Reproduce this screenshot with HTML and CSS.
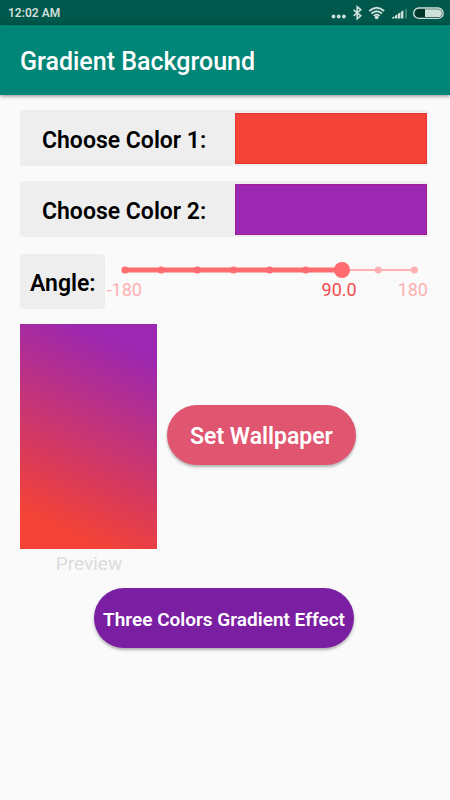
FILE: index.html
```html
<!DOCTYPE html>
<html lang="en">
<head>
<meta charset="utf-8">
<meta name="viewport" content="width=device-width, initial-scale=1">
<title>Gradient Background</title>
<link rel="stylesheet" href="styles.css">
</head>
<body>
<div class="status">
  <span>12:02 AM</span>
  <svg class="status-icons" width="114" height="16" viewBox="0 0 114 16" aria-hidden="true">
    <g fill="#cfdfda">
      <circle cx="3.500" cy="11.500" r="1.900"/><circle cx="8.700" cy="11.500" r="1.900"/><circle cx="13.900" cy="11.500" r="1.900"/>
      <circle cx="46.700" cy="12.300" r="1.900"/>
    </g>
    <path d="M23.600 4.800l7.200 6-3.600 3V1.800l3.600 3-7.200 6" fill="none" stroke="#cfdfda" stroke-width="1.600"/>
    <path d="M39.200 6q7.500-6.500 15 0M41.400 8.500q5.300-4.600 10.600 0M43.700 10.900q3-2.500 6 0" fill="none" stroke="#cfdfda" stroke-width="1.800"/>
    <path d="M62 13.500v-1l2.400-1.200v2.200zM65 13.500v-2.700l2.400-1.500v4.200zM68 13.500V8.800l2.400-1.500v6.200zM71 13.500V6.800l2.400-1.500v8.200z" fill="#cfdfda"/>
    <path d="M75 13.500V4.500l2-1.300v10.300z" fill="#3f8375"/>
    <rect x="83.700" y="3" width="29.500" height="10.400" rx="5.200" fill="#00382c" stroke="#cfdfda" stroke-width="1.400"/>
    <path d="M95 4.300h13a3.900 3.900 0 0 1 0 7.800H95z" fill="#cfdfda"/>
  </svg>
</div>
<header class="appbar"><h1>Gradient Background</h1></header>
<main>
  <div class="card">
    <label for="color1">Choose Color 1:</label>
    <input class="swatch" type="color" id="color1" value="#f44336">
  </div>
  <div class="card">
    <label for="color2">Choose Color 2:</label>
    <input class="swatch" type="color" id="color2" value="#9c27b0">
  </div>
  <div class="angle">
    <label class="angle-label" for="angle">Angle:</label>
    <div class="slider">
      <svg class="track" height="16" aria-hidden="true">
        <line class="light" x1="0" y1="8" x2="100%" y2="8" stroke-width="2"/>
        <line class="strong" x1="0" y1="8" x2="75%" y2="8" stroke-width="5"/>
        <g class="strong">
          <circle cx="0" cy="8" r="3.600"/><circle cx="12.500%" cy="8" r="3.600"/><circle cx="25%" cy="8" r="3.600"/>
          <circle cx="37.500%" cy="8" r="3.600"/><circle cx="50%" cy="8" r="3.600"/><circle cx="62.500%" cy="8" r="3.600"/>
        </g>
        <g class="light"><circle cx="87.500%" cy="8" r="3.600"/><circle cx="100%" cy="8" r="3.600"/></g>
      </svg>
      <input type="range" id="angle" min="-180" max="180" step="45" value="90">
      <div class="marks">
        <span>-180</span><output for="angle">90.0</output><span>180</span>
      </div>
    </div>
  </div>
  <div class="result">
    <figure>
      <div class="preview"></div>
      <figcaption>Preview</figcaption>
    </figure>
    <button class="pill set" type="button">Set Wallpaper</button>
  </div>
  <button class="pill three" type="button">Three Colors Gradient Effect</button>
</main>
</body>
</html>
```

FILE: styles.css
```css
* { box-sizing: border-box; }

body {
  margin: 0;
  min-height: 100vh;
  background: #fafafa;
  font-family: Roboto, "Liberation Sans", sans-serif;
  color: #000;
}

.status {
  display: flex;
  align-items: center;
  justify-content: space-between;
  height: 25px;
  padding: 0 6px 0 8px;
  background: #00574b;
  color: #cfdfda;
  font-size: 12px;
  font-weight: 600;
}

.appbar {
  display: flex;
  align-items: center;
  height: 70px;
  padding: 2px 20px 0;
  background: #008577;
  color: #fff;
  box-shadow: 0 1px 4px rgba(0, 0, 0, 0.45);
}

.appbar h1 {
  margin: 0;
  font-size: 25px;
  font-weight: 500;
}

main {
  display: flex;
  flex-direction: column;
  gap: 15px;
  padding: 15px 22px 20px 20px;
}

.card {
  display: grid;
  grid-template-columns: 215fr 192fr;
  height: 56px;
  padding: 3px 1px 2px 0;
  border-radius: 4px;
  background: #eee;
  font-size: 23px;
  font-weight: 600;
}

.card label {
  align-self: center;
  padding: 3px 0 0 22px;
}

.swatch {
  width: 100%;
  height: 51px;
  padding: 0;
  border: 0;
  background: none;
  appearance: none;
}

.swatch::-webkit-color-swatch-wrapper { padding: 0; }

.swatch::-webkit-color-swatch {
  border: 1px solid rgba(180, 0, 60, 0.2);
  border-radius: 0;
}

.angle {
  display: flex;
  gap: 2px;
  padding-top: 2px;
}

.angle-label {
  height: 55px;
  padding: 4px 9px 0 10px;
  border-radius: 4px;
  background: #eee;
  font-size: 23px;
  font-weight: 600;
  line-height: 52px;
}

.slider {
  display: grid;
  grid-template-rows: 16px 24px;
  align-content: start;
  flex: 1;
  padding-top: 8px;
}

.track {
  grid-area: 1 / 1;
  width: calc(100% - 32px);
  margin: 0 14px 0 18px;
  overflow: visible;
}

.strong { fill: #ff6b6e; stroke: #ff6b6e; }
.light { fill: #ffb0b2; stroke: #ffb0b2; }
.track g { stroke: none; }

.slider input {
  grid-area: 1 / 1;
  height: 16px;
  margin: 0 6px 0 10px;
  background: none;
  appearance: none;
}

.slider input::-webkit-slider-thumb {
  width: 16px;
  height: 16px;
  border-radius: 50%;
  background: #ff6b6e;
  appearance: none;
}

.marks {
  display: grid;
  grid-template-columns: 193fr 80fr 49fr;
  color: #ffb0b2;
  font-size: 18px;
  line-height: 24px;
}

.marks output {
  justify-self: center;
  color: #f4494f;
}

.marks span:last-child { text-align: right; }

.result {
  display: flex;
  align-items: flex-start;
  gap: 10px;
}

figure {
  width: 137px;
  margin: 0;
}

.preview {
  aspect-ratio: 137 / 225;
  background: linear-gradient(25deg, #f44336 13%, #9c27b0 87%);
}

figcaption {
  padding: 4px 0 0 1px;
  color: #dcdcdc;
  font-size: 19px;
  line-height: 22px;
  text-align: center;
}

.pill {
  height: 60px;
  border: 0;
  border-radius: 30px;
  color: #fff;
  font-family: inherit;
  font-weight: 600;
  box-shadow: 0 2px 3px rgba(0, 0, 0, 0.3);
}

.set {
  margin-top: 81px;
  padding: 2px 23px 0;
  background: #e05570;
  font-size: 23px;
}

.three {
  align-self: center;
  margin-top: -2px;
  padding: 2px 9px 0;
  background: #7b1fa2;
  font-size: 19px;
}
```
